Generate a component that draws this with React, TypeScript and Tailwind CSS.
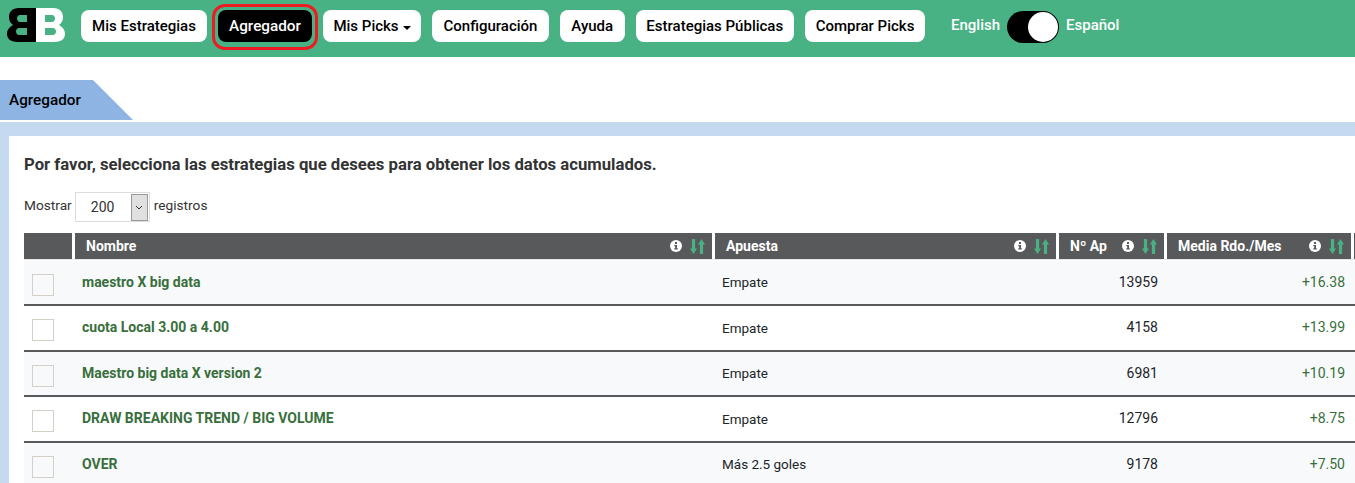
const navItems = [
  { label: "Mis Estrategias", width: "w-[126px]" },
  { label: "Agregador", width: "w-[94px]" },
  { label: "Mis Picks", width: "w-[98px]" },
  { label: "Configuración", width: "w-[117px]" },
  { label: "Ayuda", width: "w-[64.500px]" },
  { label: "Estrategias Públicas", width: "w-[158.500px]" },
  { label: "Comprar Picks", width: "w-[120px]" },
];

const rows = [
  { name: "maestro X big data", bet: "Empate", count: "13959", avg: "+16.38" },
  { name: "cuota Local 3.00 a 4.00", bet: "Empate", count: "4158", avg: "+13.99" },
  { name: "Maestro big data X version 2", bet: "Empate", count: "6981", avg: "+10.19" },
  { name: "DRAW BREAKING TREND / BIG VOLUME", bet: "Empate", count: "12796", avg: "+8.75" },
  { name: "OVER", bet: "Más 2.5 goles", count: "9178", avg: "+7.50" },
];

function Logo() {
  return (
    <svg width="58" height="34" viewBox="0 0 58 34">
      <path fillRule="evenodd" fill="#000" d="M29 0H12C5 0 2 4 2 9c0 3 1 6 4 8-3 2-6 4-6 9 0 5 4 8 11 8h18V0ZM20 7v7h-7c-2 0-3-2-3-3.500S11 7 13 7h7Zm0 13v7h-8c-2 0-3-2-3-3.500S10 20 12 20h8Z" />
      <path fillRule="evenodd" fill="#fff" d="M29 0h17c7 0 10 4 10 9 0 3-1 6-4 8 3 2 6 4 6 9 0 5-4 8-11 8H29V0Zm9 7v7h7c2 0 3-2 3-3.500S47 7 45 7h-7Zm0 13v7h8c2 0 3-2 3-3.500S48 20 46 20h-8Z" />
    </svg>
  );
}

function InfoIcon() {
  return (
    <svg width="12" height="12" viewBox="0 0 12 12">
      <circle cx="6" cy="6" r="6" fill="#fff" />
      <rect x="5" y="2" width="2" height="2" fill="#58595b" />
      <path d="M4.300 5h2.700v3.200h.8V9.500H4.300V8.200h.9V6.300h-.9Z" fill="#58595b" />
    </svg>
  );
}

function SortIcon() {
  return (
    <svg width="15" height="15" viewBox="0 0 15 15" fill="#48b284">
      <path d="M1.900 0h3.200v9.500h1.900L3.500 15 0 9.500h1.900Z" />
      <path d="M9.900 15h3.200V5.500H15L11.500 0 8 5.500h1.900Z" />
    </svg>
  );
}

function HeadCell({ label, width, pad }: { label: string; width: string; pad: string }) {
  return (
    <div className={`flex h-[26px] shrink-0 items-center justify-between bg-[#58595b] pr-[7px] ${width} ${pad}`}>
      <span className="text-[14px] font-bold text-white">{label}</span>
      <span className="flex items-center gap-[8px]">
        <InfoIcon />
        <SortIcon />
      </span>
    </div>
  );
}

export default function App() {
  return (
    <div className="h-[483px] w-[1355px] overflow-hidden bg-white font-['Roboto',sans-serif] text-[#212529]">
      <header className="flex h-[57px] items-start bg-[#48b284] pl-[7px] pt-[10px]">
        <div className="mr-[16px] mt-[-2px]">
          <Logo />
        </div>
        <nav className="flex items-start gap-[11px]">
          {navItems.map((item) =>
            item.label === "Agregador" ? (
              <div key={item.label} className="mx-[-6px] mb-[-8px] mt-[-6px] rounded-[13px] border-[3px] border-[#ed1c24] px-[3px] pb-[5px] pt-[3px]">
                <button className={`h-[32px] rounded-[8px] bg-black pt-px text-[15.300px] font-medium text-white ${item.width}`}>{item.label}</button>
              </div>
            ) : (
              <button key={item.label} className={`flex h-[32px] items-center justify-center rounded-[8px] bg-white pt-px text-[15px] font-medium text-black ${item.width}`}>
                {item.label}
                {item.label === "Mis Picks" && <span className="ml-[4px] mt-[2px] border-x-[4px] border-t-[4px] border-x-transparent border-t-black" />}
              </button>
            ),
          )}
        </nav>
        <div className="ml-[26px] mt-[1px] flex items-start gap-[7px] text-[15px] font-medium text-white">
          <span className="mt-[3px]">English</span>
          <div className="flex h-[32px] w-[52px] items-center justify-end rounded-full bg-black pr-[1px]">
            <div className="h-[30px] w-[30px] rounded-full bg-white" />
          </div>
          <span className="mt-[3px]">Español</span>
        </div>
      </header>

      <div className="mt-[23px] flex h-[40px] w-[133px] items-center bg-[#8db4e2] pl-[9px] text-[15.300px] font-medium text-black [clip-path:polygon(0_0,93px_0,100%_100%,0_100%)]">
        Agregador
      </div>

      <div className="mt-[2px] bg-[#c5d9f1] pl-[9px] pt-[14px]">
        <main className="h-[347px] bg-white pl-[15px] pt-[19px]">
          <h2 className="text-[16.700px] font-bold leading-[20px] text-[#333]">
            Por favor, selecciona las estrategias que desees para obtener los datos acumulados.
          </h2>
          <div className="mt-[17px] flex h-[30px] items-center gap-[3px] text-[13.700px] text-[#333]">
            <span className="mt-[-3px]">Mostrar</span>
            <div className="flex h-[30px] w-[75px] items-center border border-[#ddd] bg-white p-[1px] pl-[15px] text-[14px]">
              <span className="flex-1">200</span>
              <span className="flex h-[27px] w-[17px] items-center justify-center border border-[#999] bg-[#e0e0e0]">
                <svg width="8" height="5" viewBox="0 0 8 5">
                  <path d="M1 1l3 3 3-3" fill="none" stroke="#333" strokeWidth="1" />
                </svg>
              </span>
            </div>
            <span className="ml-px mt-[-3px]">registros</span>
          </div>

          <div className="mt-[11px] w-[1340px]">
            <div className="flex gap-[3px]">
              <div className="h-[26px] w-[48px] shrink-0 bg-[#58595b]" />
              <HeadCell label="Nombre" width="w-[637px]" pad="pl-[11px]" />
              <HeadCell label="Apuesta" width="w-[341px]" pad="pl-[11px]" />
              <HeadCell label="Nº Ap" width="w-[105px]" pad="pl-[11px]" />
              <HeadCell label="Media Rdo./Mes" width="w-[184px]" pad="pl-[11px]" />
              <div className="h-[26px] flex-1 bg-[#58595b]" />
            </div>
            <div className="border-t border-[#e5e5e5] pt-[0.500px]">
              {rows.map((row) => (
                <div key={row.name} className="flex h-[45.500px] items-center border-b-2 border-[#58595b] text-[14px] odd:bg-[#f8f9fb] even:bg-white">
                  <div className="w-[58px] shrink-0 pl-[8px]">
                    <div className="mt-[5px] h-[22px] w-[22px] border border-[#d4d0c8]" />
                  </div>
                  <div className="w-[640px] shrink-0 font-bold text-[#386f3c]">{row.name}</div>
                  <div className="w-[300px] shrink-0 text-[13.500px]">{row.bet}</div>
                  <div className="w-[136px] shrink-0 text-right">{row.count}</div>
                  <div className="w-[187px] shrink-0 text-right text-[#386f3c]">{row.avg}</div>
                </div>
              ))}
            </div>
          </div>
        </main>
      </div>
    </div>
  );
}
